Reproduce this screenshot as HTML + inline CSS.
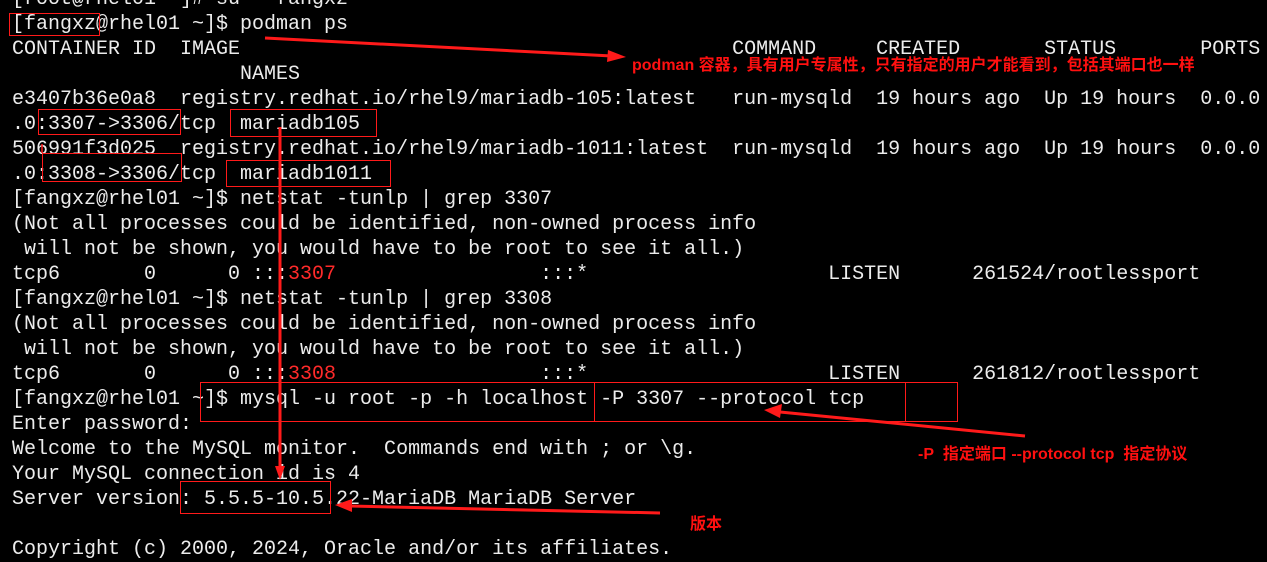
<!DOCTYPE html>
<html><head><meta charset="utf-8"><style>
html,body{margin:0;padding:0;background:#000;width:1267px;height:560px;overflow:hidden}
pre{position:absolute;left:12px;top:-13px;margin:0;font-family:"Liberation Mono","Noto Sans CJK SC",monospace;font-size:20px;line-height:25px;color:#ececec;letter-spacing:0}
.r{color:#ff2a2a}
.b{position:absolute;border:1px solid #ff1a1a;box-sizing:border-box}
.t{position:absolute;color:#ff1010;font-family:"Liberation Sans","Noto Sans CJK SC",sans-serif;font-weight:bold;font-size:16px;white-space:nowrap}
svg{position:absolute;left:0;top:0}
</style></head><body>
<pre>[root@rhel01 ~]# su - fangxz
[fangxz@rhel01 ~]$ podman ps
CONTAINER ID  IMAGE                                         COMMAND     CREATED       STATUS       PORTS
                   NAMES
e3407b36e0a8  registry.redhat.io/rhel9/mariadb-105:latest   run-mysqld  19 hours ago  Up 19 hours  0.0.0
.0:3307-&gt;3306/tcp  mariadb105
506991f3d025  registry.redhat.io/rhel9/mariadb-1011:latest  run-mysqld  19 hours ago  Up 19 hours  0.0.0
.0:3308-&gt;3306/tcp  mariadb1011
[fangxz@rhel01 ~]$ netstat -tunlp | grep 3307
(Not all processes could be identified, non-owned process info
 will not be shown, you would have to be root to see it all.)
tcp6       0      0 :::<span class="r">3307</span>                 :::*                    LISTEN      261524/rootlessport
[fangxz@rhel01 ~]$ netstat -tunlp | grep 3308
(Not all processes could be identified, non-owned process info
 will not be shown, you would have to be root to see it all.)
tcp6       0      0 :::<span class="r">3308</span>                 :::*                    LISTEN      261812/rootlessport
[fangxz@rhel01 ~]$ mysql -u root -p -h localhost -P 3307 --protocol tcp
Enter password:
Welcome to the MySQL monitor.  Commands end with ; or \g.
Your MySQL connection id is 4
Server version: 5.5.5-10.5.22-MariaDB MariaDB Server

Copyright (c) 2000, 2024, Oracle and/or its affiliates.</pre>

<div class="b" style="left:9px;top:13px;width:91px;height:23px"></div>
<div class="b" style="left:38px;top:109px;width:143px;height:26px"></div>
<div class="b" style="left:230px;top:109px;width:147px;height:28px"></div>
<div class="b" style="left:42px;top:153px;width:140px;height:29px"></div>
<div class="b" style="left:226px;top:160px;width:165px;height:27px"></div>
<div class="b" style="left:200px;top:382px;width:758px;height:40px"></div>
<div class="b" style="left:594px;top:382px;width:312px;height:40px"></div>
<div class="b" style="left:180px;top:481px;width:151px;height:33px"></div>

<svg width="1267" height="560">
<g stroke="#ff1a1a" fill="none" stroke-width="3">
<line x1="265" y1="38" x2="612" y2="56"/>
<line x1="280" y1="127" x2="280" y2="470"/>
<line x1="1025" y1="436" x2="780" y2="412"/>
<line x1="660" y1="513" x2="350" y2="506"/>
<line x1="42" y1="144" x2="42" y2="153" stroke-width="1.5"/>
</g>
<g fill="#ff1a1a">
<polygon points="626,57 608,50 607,62"/>
<polygon points="280,480 275,466 285,466"/>
<polygon points="764,410 782,404 780,418"/>
<polygon points="335,505 352,499 352,512"/>
</g>
</svg>

<div class="t" style="left:632px;top:51px">podman 容器，具有用户专属性，只有指定的用户才能看到，包括其端口也一样</div>
<div class="t" style="left:918px;top:440px">-P&nbsp; 指定端口 --protocol tcp&nbsp; 指定协议</div>
<div class="t" style="left:690px;top:510px">版本</div>
</body></html>
